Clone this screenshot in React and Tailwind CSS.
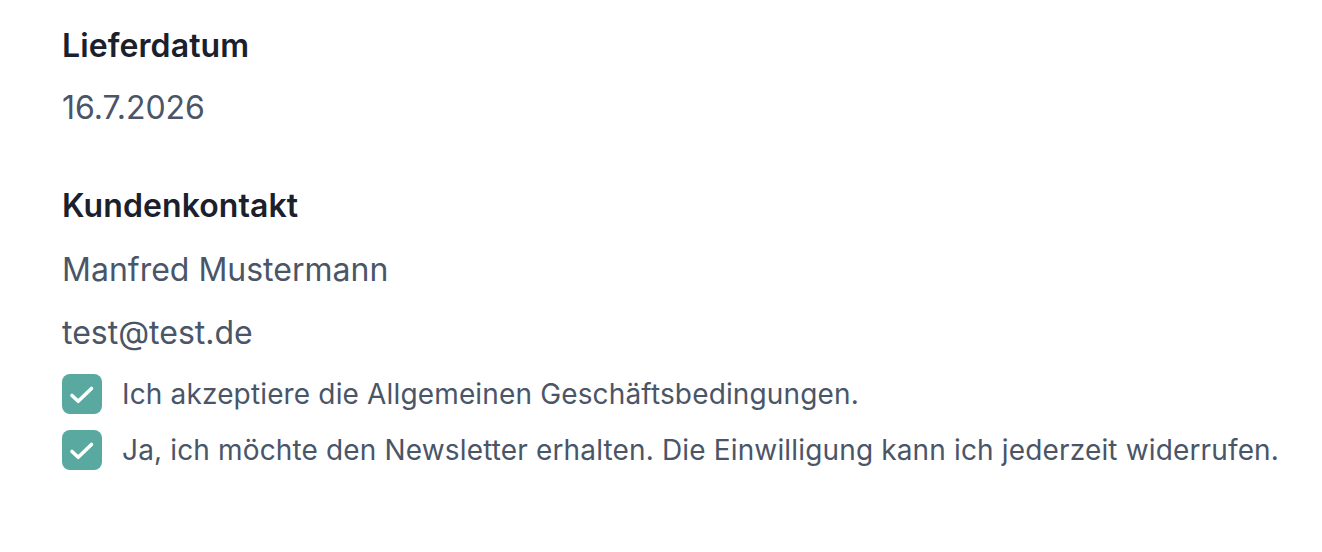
import React from "react";

function Check() {
  return (
    <span className="block h-10 w-10 shrink-0 rounded-lg bg-[#5aa9a1]">
      <svg viewBox="0 0 40 40" className="h-10 w-10" fill="none" stroke="white" strokeWidth="3.6" strokeLinecap="round" strokeLinejoin="round">
        <path d="M10 21.5L16.2 27.3L29.5 14.5" />
      </svg>
    </span>
  );
}

export default function App() {
  return (
    <div className="min-h-[552px] w-[1322px] bg-white pl-[62px] pt-[26px] font-['Inter',sans-serif]">
      <div className="text-[32px] font-semibold leading-[40px] tracking-[0.1px] text-[#1a202c]">Lieferdatum</div>
      <div className="mt-[18px] text-[32px] leading-[48px] text-[#4a5568]">16.7.2026</div>
      <div className="mt-[54px] text-[32px] font-semibold leading-[40px] tracking-[0.1px] text-[#1a202c]">Kundenkontakt</div>
      <div className="mt-[20px] text-[32px] leading-[48px] text-[#4a5568]">Manfred Mustermann</div>
      <div className="mt-[15px] text-[32px] leading-[48px] text-[#4a5568]">test@test.de</div>
      <div className="mt-[17px] flex flex-col gap-4">
        <label className="flex items-center gap-5">
          <Check />
          <span className="text-[28px] leading-[40px] tracking-[0.15px] text-[#4a5568]">Ich akzeptiere die Allgemeinen Geschäftsbedingungen.</span>
        </label>
        <label className="flex items-center gap-5">
          <Check />
          <span className="text-[28px] leading-[40px] tracking-[0.15px] text-[#4a5568]">Ja, ich möchte den Newsletter erhalten. Die Einwilligung kann ich jederzeit widerrufen.</span>
        </label>
      </div>
    </div>
  );
}
